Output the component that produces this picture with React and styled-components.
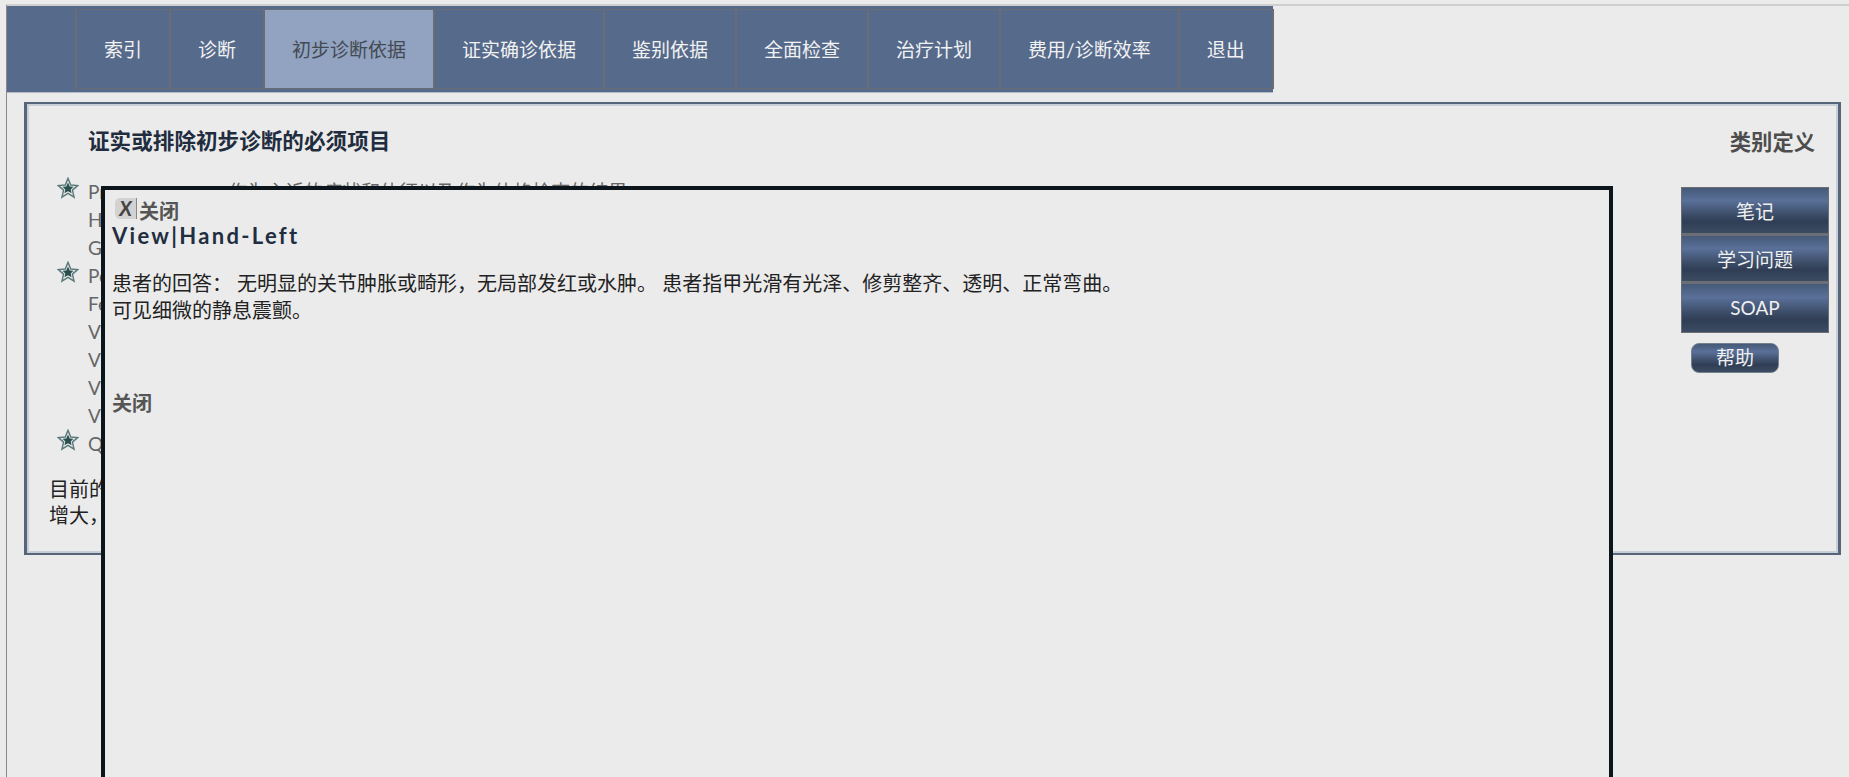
import React from 'react';
import styled, { createGlobalStyle } from 'styled-components';

const GlobalStyle = createGlobalStyle`
  html, body {
    margin: 0;
    padding: 0;
    height: 100%;
    overflow: hidden;
    background: #ebebeb;
    font-family: Lato, "Noto Sans CJK SC", sans-serif;
    font-size: 19px;
  }
`;

const Page = styled.div`
  position: relative;
  height: 777px;
  padding: 4px 0 0 6px;
  box-sizing: border-box;
  overflow: hidden;
`;

const Frame = styled.div`
  height: 100%;
  border-top: 2px solid #cfcfcf;
  border-left: 1px solid #8a8a8a;
  box-sizing: border-box;
`;

const Nav = styled.nav`
  display: flex;
  width: 1266px;
  height: 87px;
  padding: 3px 0 3px 68px;
  box-sizing: border-box;
  background: #566a8b;
  border-bottom: 1px solid #b4bac3;
`;

const Tab = styled.div`
  display: flex;
  align-items: center;
  padding: 0 27px 2px;
  border: 1px solid #696d73;
  border-width: 1px 2px 1px 0;
  color: ${(p) => (p.active ? '#444a52' : '#f2f2f2')};
  background: ${(p) => (p.active ? '#91a3c1' : 'transparent')};
  white-space: nowrap;

  &:first-child {
    border-left-width: 2px;
  }
`;

const Panel = styled.section`
  margin: 9px 0 0 17px;
  width: 1817px;
  height: 453px;
  box-sizing: border-box;
  border: 3px solid #56657a;
  border-width: 2px 3px;
  box-shadow: inset 0 0 0 2px #c8ced6;
  display: flex;
  flex-direction: column;
`;

const PanelHead = styled.header`
  display: flex;
  justify-content: space-between;
  align-items: center;
  height: 28px;
  margin-top: 23px;
  padding: 0 23px 0 61px;
`;

const Title = styled.h2`
  margin: 0;
  font-size: 21.6px;
  line-height: 28px;
  font-weight: 700;
  color: #1f2d3f;
`;

const Definition = styled.a`
  margin-bottom: 2px;
  font-size: 21.3px;
  font-weight: 700;
  color: #4d4d4d;
`;

const PanelBody = styled.div`
  display: flex;
  justify-content: space-between;
  margin-top: 23px;
  padding: 0 9px 0 0;
`;

const Content = styled.div`
  display: flex;
  flex-direction: column;
`;

const List = styled.ul`
  margin: 0;
  padding: 0;
  list-style: none;
`;

const Item = styled.li`
  position: relative;
  height: 28px;
  padding-left: 61px;
  line-height: 28px;
  font-size: 19px;
  color: #666;
  white-space: nowrap;
`;

const StarMark = styled.svg`
  position: absolute;
  left: 30px;
  top: -1px;
  width: 22px;
  height: 22px;
`;

const Gap = styled.span`
  display: inline-block;
  width: 122px;
`;

const Para = styled.p`
  margin: 18px 0 0 22px;
  font-size: 20px;
  line-height: 26px;
  color: #222;
`;

const Aside = styled.aside`
  display: flex;
  flex-direction: column;
  align-items: flex-start;
  width: 148px;
  margin-top: 9px;
`;

const barGradient = `linear-gradient(#465978 0%, #5a7099 28%, #3d4e69 58%, #2f3e55 75%, #3c4c63 100%)`;

const SideButton = styled.div`
  width: 148px;
  height: ${(p) => (p.last ? 50 : 48)}px;
  box-sizing: border-box;
  border: 1px solid #6b6f75;
  border-bottom-width: ${(p) => (p.last ? 1 : 2)}px;
  background: ${barGradient};
  color: #f0f0f0;
  text-align: center;
  line-height: 47px;
`;

const HelpButton = styled.div`
  width: 88px;
  height: 30px;
  margin: 10px 0 0 10px;
  box-sizing: border-box;
  border: 1px solid #75808f;
  border-radius: 8px;
  background: ${barGradient};
  color: #f0f0f0;
  text-align: center;
  line-height: 28px;
`;

const Modal = styled.div`
  position: absolute;
  left: 101px;
  top: 186px;
  width: 1512px;
  height: 800px;
  box-sizing: border-box;
  padding: 8px 7px;
  border: 4px solid #0b151b;
  background: #ebebeb;
  font-size: 20px;
`;

const CloseRow = styled.div`
  display: flex;
  align-items: flex-start;
  margin-left: 3px;
  height: 26px;
`;

const CloseIcon = styled.span`
  width: 22px;
  height: 21px;
  box-sizing: border-box;
  border-right: 1px solid #888;
  border-radius: 5px 0 0 5px;
  background: #d2d2d2;
  color: #444;
  font-size: 20px;
  font-weight: 700;
  font-style: italic;
  line-height: 21px;
  text-align: center;
`;

const CloseText = styled.span`
  margin: 1px 0 0 2px;
  font-weight: 700;
  line-height: 24px;
  color: #555;
`;

const ModalHeading = styled.h3`
  margin: 0;
  font-size: 22px;
  line-height: 24px;
  font-weight: 700;
  letter-spacing: 2.3px;
  color: #1f2e40;
`;

const Answer = styled.p`
  margin: 22px 0 0;
  line-height: 27px;
  color: #222;
`;

const BottomClose = styled.div`
  margin-top: 65px;
  font-weight: 700;
  line-height: 28px;
  color: #555;
`;

const Star = () => (
  <StarMark viewBox="0 0 24 24">
    <path
      d="M12 1.5 L15 8.8 L22.5 9.4 L16.8 14.3 L18.6 22 L12 17.9 L5.4 22 L7.2 14.3 L1.5 9.4 L9 8.8 Z"
      fill="none"
      stroke="#5d7a7a"
      strokeWidth="1.6"
    />
    <path
      d="M12 6 L13.9 10.3 L18 10.7 L14.9 13.6 L15.9 17.8 L12 15.6 L8.1 17.8 L9.1 13.6 L6 10.7 L10.1 10.3 Z"
      fill="#27504f"
    />
  </StarMark>
);

const tabs = ['索引', '诊断', '初步诊断依据', '证实确诊依据', '鉴别依据', '全面检查', '治疗计划', '费用/诊断效率', '退出'];
const items = [
  { id: 1, star: true, text: 'Pr', note: '作为主诉的症状和体征以及作为体格检查的结果' },
  { id: 2, text: 'H' },
  { id: 3, text: 'G' },
  { id: 4, star: true, text: 'Pe' },
  { id: 5, text: 'Fe' },
  { id: 6, text: 'V' },
  { id: 7, text: 'V' },
  { id: 8, text: 'V' },
  { id: 9, text: 'V' },
  { id: 10, star: true, text: 'Q' },
];

const App = () => (
  <Page>
    <GlobalStyle />
    <Frame>
      <Nav>
        {tabs.map((t) => (
          <Tab key={t} active={t === '初步诊断依据'}>{t}</Tab>
        ))}
      </Nav>
      <Panel>
        <PanelHead>
          <Title>证实或排除初步诊断的必须项目</Title>
          <Definition>类别定义</Definition>
        </PanelHead>
        <PanelBody>
          <Content>
            <List>
              {items.map((it) => (
                <Item key={it.id}>
                  {it.star && <Star />}
                  {it.text}
                  {it.note && <Gap />}
                  {it.note}
                </Item>
              ))}
            </List>
            <Para>目前的<br />增大，</Para>
          </Content>
          <Aside>
            <SideButton>笔记</SideButton>
            <SideButton>学习问题</SideButton>
            <SideButton last>SOAP</SideButton>
            <HelpButton>帮助</HelpButton>
          </Aside>
        </PanelBody>
      </Panel>
    </Frame>
    <Modal>
      <CloseRow>
        <CloseIcon>X</CloseIcon>
        <CloseText>关闭</CloseText>
      </CloseRow>
      <ModalHeading>View|Hand-Left</ModalHeading>
      <Answer>
        患者的回答： 无明显的关节肿胀或畸形，无局部发红或水肿。 患者指甲光滑有光泽、修剪整齐、透明、正常弯曲。<br />
        可见细微的静息震颤。
      </Answer>
      <BottomClose>关闭</BottomClose>
    </Modal>
  </Page>
);

export default App;
